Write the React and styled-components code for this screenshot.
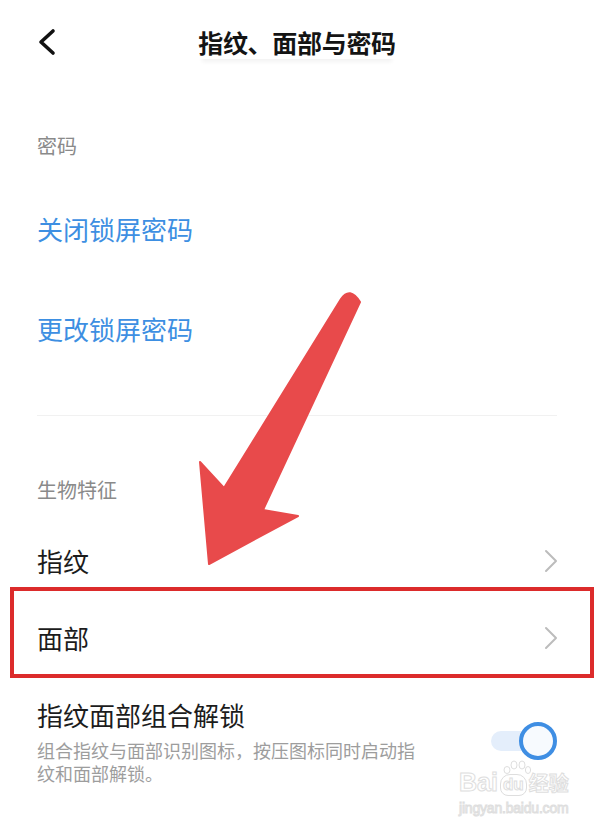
import React from "react";
import styled, { createGlobalStyle } from "styled-components";

const GlobalStyle = createGlobalStyle`
  body {
    margin: 0;
    background: #ffffff;
  }
`;

const Page = styled.div`
  position: relative;
  width: 598px;
  height: 826px;
  overflow: hidden;
  background: #ffffff;
  font-family: "Noto Sans CJK SC", "Noto Sans", sans-serif;
  padding: 0 41px 0 37px;
  box-sizing: border-box;
`;

const Header = styled.div`
  display: grid;
  grid-template-columns: 40px 1fr 40px;
  align-items: center;
  height: 84px;
`;

const BackButton = styled.button`
  display: flex;
  align-items: center;
  width: 24px;
  height: 30px;
  padding: 0;
  border: none;
  background: none;
`;

const Title = styled.h1`
  justify-self: center;
  margin: 0;
  font-size: 25px;
  line-height: 34px;
  font-weight: 700;
  color: #141414;
  letter-spacing: -0.3px;
  box-shadow: 0 7px 4px -4px rgba(0, 0, 0, 0.05);
`;

const SectionLabel = styled.div`
  display: flex;
  align-items: center;
  height: 50px;
  margin-top: ${(p) => p.$top}px;
  margin-bottom: 8px;
  font-size: 20px;
  color: #8a8a8a;
`;

const LinkRow = styled.div`
  display: flex;
  align-items: center;
  height: 100px;
  font-size: 26px;
  color: #3d8fe2;
`;

const Divider = styled.hr`
  margin: 37px 0 0;
  border: none;
  height: 1px;
  background: #f1f1f1;
`;

const NavRow = styled.div`
  display: flex;
  align-items: center;
  justify-content: space-between;
  height: 77px;
  font-size: 26px;
  color: #1c1c1c;
`;

const Chevron = styled.svg`
  width: 14px;
  height: 24px;
  margin-right: -1px;
`;

const ToggleRow = styled.div`
  display: flex;
  align-items: center;
  justify-content: space-between;
  padding-top: 22px;
`;

const ToggleText = styled.div`
  display: flex;
  flex-direction: column;
  gap: 7px;
  width: 392px;
`;

const ToggleTitle = styled.div`
  font-size: 26px;
  line-height: 34px;
  color: #1c1c1c;
`;

const ToggleDesc = styled.div`
  font-size: 18px;
  line-height: 22.5px;
  color: #9d9d9d;
`;

const Switch = styled.div`
  position: relative;
  display: flex;
  align-items: center;
  justify-content: flex-end;
  width: 66px;
  height: 38px;
  margin-top: -1px;
`;

const Track = styled.div`
  position: absolute;
  left: 0;
  right: 14px;
  height: 20px;
  border-radius: 10px;
  background: #e4eefb;
`;

const Knob = styled.div`
  position: relative;
  width: 38px;
  height: 38px;
  border-radius: 50%;
  box-sizing: border-box;
  border: 4.5px solid #3f8ee3;
  background: #f7fafe;
`;

const Highlight = styled.div`
  position: absolute;
  left: 10px;
  top: 587px;
  width: 584px;
  height: 91px;
  box-sizing: border-box;
  border: 4px solid #dc2b2b;
  pointer-events: none;
`;

const ArrowLayer = styled.svg`
  position: absolute;
  left: 0;
  top: 0;
  width: 598px;
  height: 826px;
  pointer-events: none;
`;

const Watermark = styled.div`
  position: absolute;
  left: 459px;
  top: 768px;
  display: flex;
  flex-direction: column;
  align-items: flex-start;
  color: #ffffff;
  -webkit-text-stroke: 1px #dedede;
  font-family: "Liberation Sans", Arial, sans-serif;
  pointer-events: none;
`;

const MarkTop = styled.div`
  display: flex;
  align-items: flex-end;
  font-size: 25px;
  line-height: 28px;
  font-weight: 700;
`;

const Paw = styled.span`
  position: relative;
  display: inline-block;
  margin: 0 2px;
  padding: 0 2px;
  font-size: 17px;
  line-height: 20px;
  border: 1px solid #dedede;
  border-radius: 10px 10px 8px 8px;
`;

const Toes = styled.svg`
  position: absolute;
  left: 2px;
  top: -15px;
  width: 28px;
  height: 14px;
`;

const MarkCn = styled.span`
  font-family: "Noto Sans CJK SC", sans-serif;
  font-size: 20px;
  line-height: 26px;
  font-weight: 700;
`;

const MarkUrl = styled.div`
  font-size: 14px;
  line-height: 20px;
  margin-top: 2px;
  letter-spacing: -0.2px;
`;

function ChevronRight() {
  return (
    <Chevron viewBox="0 0 14 24">
      <polyline
        points="2,2 12,12 2,22"
        fill="none"
        stroke="#bcbcbc"
        strokeWidth="2"
        strokeLinecap="round"
        strokeLinejoin="round"
      />
    </Chevron>
  );
}

export default function App() {
  return (
    <>
      <GlobalStyle />
      <Page>
        <Header>
          <BackButton>
            <svg width="20" height="28" viewBox="0 0 20 28">
              <polyline
                points="16,3 4,14 16,25"
                fill="none"
                stroke="#111"
                strokeWidth="3.6"
                strokeLinecap="round"
                strokeLinejoin="round"
              />
            </svg>
          </BackButton>
          <Title>指纹、面部与密码</Title>
          <span />
        </Header>

        <SectionLabel $top={36}>密码</SectionLabel>
        <LinkRow>关闭锁屏密码</LinkRow>
        <LinkRow>更改锁屏密码</LinkRow>

        <Divider />

        <SectionLabel $top={48}>生物特征</SectionLabel>
        <NavRow>
          指纹
          <ChevronRight />
        </NavRow>
        <NavRow>
          面部
          <ChevronRight />
        </NavRow>

        <ToggleRow>
          <ToggleText>
            <ToggleTitle>指纹面部组合解锁</ToggleTitle>
            <ToggleDesc>
              组合指纹与面部识别图标，按压图标同时启动指纹和面部解锁。
            </ToggleDesc>
          </ToggleText>
          <Switch>
            <Track />
            <Knob />
          </Switch>
        </ToggleRow>

        <Highlight />

        <ArrowLayer viewBox="0 0 598 826">
          <path
            d="M341 299 Q350 286 360 302 L263 510 L298 516 L209 564 L200 462 L224 488 Z"
            fill="#e84a4b"
            stroke="#e84a4b"
            strokeWidth="2"
            strokeLinejoin="round"
          />
        </ArrowLayer>

        <Watermark>
          <MarkTop>
            Bai
            <Paw>
              <Toes viewBox="0 0 28 14">
                <ellipse cx="4" cy="10" rx="3" ry="3.5" fill="none" stroke="#dedede" />
                <ellipse cx="11" cy="5" rx="3" ry="4" fill="none" stroke="#dedede" />
                <ellipse cx="19" cy="5" rx="3" ry="4" fill="none" stroke="#dedede" />
                <ellipse cx="25" cy="10" rx="2.6" ry="3.5" fill="none" stroke="#dedede" />
              </Toes>
              du
            </Paw>
            <MarkCn>经验</MarkCn>
          </MarkTop>
          <MarkUrl>jingyan.baidu.com</MarkUrl>
        </Watermark>
      </Page>
    </>
  );
}
